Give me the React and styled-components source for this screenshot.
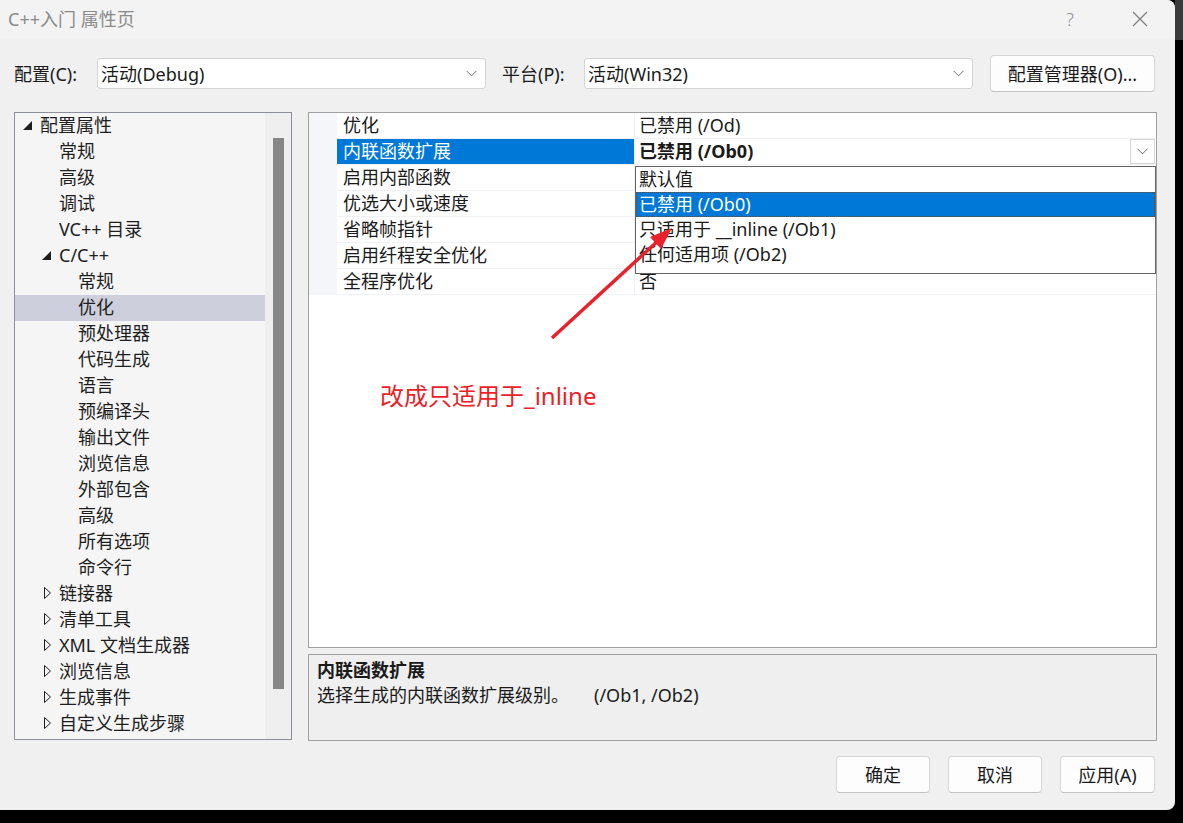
import styled, { createGlobalStyle } from "styled-components";

const GlobalStyle = createGlobalStyle`
  html, body {
    margin: 0;
    padding: 0;
    background: #000;
  }
  body {
    font-family: "Noto Sans", "Noto Sans CJK SC", sans-serif;
    color: #1a1a1a;
  }
`;

const Screen = styled.div`
  width: 1183px;
  height: 823px;
  display: flex;
  background: #000;
  overflow: hidden;
`;

const Dialog = styled.div`
  position: relative;
  width: 1175px;
  height: 810px;
  flex: none;
  background: #f0f0f0;
  border-radius: 0 8px 8px 0;
  display: flex;
  flex-direction: column;
  overflow: hidden;
`;

const Backdrop = styled.div`
  flex: 1;
  display: flex;
  flex-direction: column;
`;

const BackdropTop = styled.div`
  height: 40px;
  background: #3a3a3a;
`;

const TitleBar = styled.div`
  height: 38px;
  flex: none;
  display: flex;
  align-items: center;
  background: #f3f3f3;
  padding-left: 8px;
`;

const TitleText = styled.div`
  font-size: 18px;
  line-height: 22px;
  color: #8a8a8a;
`;

const TitleControls = styled.div`
  margin-left: auto;
  display: flex;
  height: 100%;
`;

const TitleButton = styled.div`
  width: 70px;
  height: 100%;
  display: flex;
  align-items: center;
  justify-content: center;
  color: #8c8c8c;
  font-size: 18px;
  font-weight: 300;
`;

const Body = styled.div`
  flex: 1;
  display: flex;
  flex-direction: column;
  padding: 0 18px 0 14px;
`;

const ConfigRow = styled.div`
  margin-top: 17px;
  height: 37px;
  display: flex;
  align-items: center;
`;

const FieldLabel = styled.div`
  width: ${(p) => p.$width}px;
  margin-left: ${(p) => p.$offset || 0}px;
  font-size: 18px;
  line-height: 26px;
  white-space: nowrap;
`;

const Select = styled.div`
  width: 389px;
  height: 31px;
  box-sizing: border-box;
  background: #fff;
  border: 1px solid #d4d4d4;
  border-radius: 3px;
  display: flex;
  align-items: center;
  padding: 0 8px 0 3px;
  font-size: 18px;
  line-height: 26px;
`;

const SelectValue = styled.span`
  flex: 1;
`;

const Button = styled.div`
  width: ${(p) => p.$width}px;
  height: 37px;
  margin-left: ${(p) => p.$offset || 0}px;
  box-sizing: border-box;
  background: #fdfdfd;
  border: 1px solid #d6d6d6;
  border-bottom-color: #c4c4c4;
  border-radius: 4px;
  display: flex;
  align-items: center;
  justify-content: center;
  font-size: 18px;
  line-height: 26px;
  color: #1a1a1a;
`;

const Main = styled.div`
  margin-top: 20px;
  display: grid;
  grid-template-columns: 278px 849px;
  column-gap: 16px;
`;

const TreePanel = styled.div`
  height: 628px;
  box-sizing: border-box;
  border: 1px solid #8a8f98;
  background: #f5f5f5;
  display: grid;
  grid-template-columns: 1fr 26px;
  overflow: hidden;
`;

const TreeList = styled.div`
  display: flex;
  flex-direction: column;
`;

const TreeRow = styled.div`
  height: 26px;
  box-sizing: border-box;
  padding-bottom: 2px;
  flex: none;
  display: flex;
  align-items: center;
  padding-left: ${(p) => 8 + p.$level * 19}px;
  background: ${(p) => (p.$selected ? "#cdd0dc" : "transparent")};
  font-size: 18px;
  line-height: 24px;
  color: #1e1e1e;
  white-space: nowrap;
`;

const Toggle = styled.span`
  width: 17px;
  flex: none;
  display: flex;
  align-items: center;
`;

const ScrollTrack = styled.div`
  background: #efefef;
  padding: 25px 6px 0 8px;
`;

const ScrollThumb = styled.div`
  height: 551px;
  width: 11px;
  background: #868686;
`;

const RightColumn = styled.div`
  display: flex;
  flex-direction: column;
  gap: 6px;
`;

const PropGrid = styled.div`
  position: relative;
  height: 536px;
  box-sizing: border-box;
  border: 1px solid #a0a0a0;
  background: #fff;
`;

const PropRow = styled.div`
  height: 26px;
  display: grid;
  grid-template-columns: 28px 298px 1fr;
  font-size: 18px;
  line-height: 25px;
`;

const Gutter = styled.div`
  background: #f4f6fa;
`;

const NameCell = styled.div`
  padding-left: 6px;
  border-bottom: 1px solid #eff1f5;
  border-right: 1px solid #eff1f5;
  background: ${(p) => (p.$selected ? "#0078d7" : "#fff")};
  color: ${(p) => (p.$selected ? "#fff" : "#1a1a1a")};
  white-space: nowrap;
`;

const ValueCell = styled.div`
  display: flex;
  align-items: flex-start;
  padding-left: 4px;
  border-bottom: 1px solid #eff1f5;
  font-weight: ${(p) => (p.$bold ? 700 : 400)};
  color: #1a1a1a;
  white-space: nowrap;
`;

const ValueText = styled.span`
  flex: 1;
`;

const DropButton = styled.div`
  width: 25px;
  height: 25px;
  margin-right: 1px;
  box-sizing: border-box;
  border: 1px solid #d6d6d6;
  background: #fff;
  display: flex;
  align-items: center;
  justify-content: center;
`;

const DropList = styled.div`
  position: absolute;
  left: 326px;
  top: 53px;
  width: 521px;
  height: 108px;
  box-sizing: border-box;
  border: 1px solid #646464;
  background: #fff;
  display: flex;
  flex-direction: column;
`;

const DropItem = styled.div`
  height: 25px;
  flex: none;
  padding-left: 3px;
  font-size: 18px;
  line-height: 25px;
  background: ${(p) => (p.$selected ? "#0078d7" : "transparent")};
  color: ${(p) => (p.$selected ? "#fff" : "#1a1a1a")};
  outline: ${(p) => (p.$selected ? "1px dotted #7a4a1a" : "none")};
  outline-offset: -1px;
  white-space: nowrap;
`;

const Description = styled.div`
  height: 87px;
  box-sizing: border-box;
  border: 1px solid #a0a0a0;
  background: #efefef;
  padding: 3px 8px 0 8px;
  font-size: 18px;
  line-height: 25px;
`;

const DescTitle = styled.div`
  font-weight: 700;
`;

const DescFlag = styled.span`
  margin-left: 25px;
`;

const Footer = styled.div`
  margin-top: 15px;
  padding-right: 2px;
  display: flex;
  justify-content: flex-end;
  gap: 18px;
`;

const Annotation = styled.div`
  position: absolute;
  left: 380px;
  top: 381px;
  font-size: 24px;
  line-height: 30px;
  color: #ea2228;
  white-space: nowrap;
`;

const ArrowLayer = styled.svg`
  position: absolute;
  left: 0;
  top: 0;
  pointer-events: none;
`;

const Chevron = () => (
  <svg width="11" height="7" viewBox="0 0 11 7">
    <path d="M0.5 0.8 L5.5 5.8 L10.5 0.8" fill="none" stroke="#6d6d6d" strokeWidth="1" />
  </svg>
);

const OpenArrow = () => (
  <svg width="9" height="9" viewBox="0 0 9 9">
    <polygon points="9,0 9,9 0,9" fill="#1e1e1e" />
  </svg>
);

const ClosedArrow = () => (
  <svg width="9" height="12" viewBox="0 0 9 12" style={{ marginLeft: 2 }}>
    <polygon points="0.5,0.5 6.5,6 0.5,11.5" fill="none" stroke="#1e1e1e" strokeWidth="1" />
  </svg>
);

const treeItems = [
  { label: "配置属性", level: 0, toggle: "open" },
  { label: "常规", level: 1 },
  { label: "高级", level: 1 },
  { label: "调试", level: 1 },
  { label: "VC++ 目录", level: 1 },
  { label: "C/C++", level: 1, toggle: "open" },
  { label: "常规", level: 2 },
  { label: "优化", level: 2, selected: true },
  { label: "预处理器", level: 2 },
  { label: "代码生成", level: 2 },
  { label: "语言", level: 2 },
  { label: "预编译头", level: 2 },
  { label: "输出文件", level: 2 },
  { label: "浏览信息", level: 2 },
  { label: "外部包含", level: 2 },
  { label: "高级", level: 2 },
  { label: "所有选项", level: 2 },
  { label: "命令行", level: 2 },
  { label: "链接器", level: 1, toggle: "closed" },
  { label: "清单工具", level: 1, toggle: "closed" },
  { label: "XML 文档生成器", level: 1, toggle: "closed" },
  { label: "浏览信息", level: 1, toggle: "closed" },
  { label: "生成事件", level: 1, toggle: "closed" },
  { label: "自定义生成步骤", level: 1, toggle: "closed" },
];

const properties = [
  { name: "优化", value: "已禁用 (/Od)" },
  { name: "内联函数扩展", value: "已禁用 (/Ob0)", selected: true },
  { name: "启用内部函数", value: "" },
  { name: "优选大小或速度", value: "" },
  { name: "省略帧指针", value: "" },
  { name: "启用纤程安全优化", value: "" },
  { name: "全程序优化", value: "否" },
];

const options = [
  { label: "默认值" },
  { label: "已禁用 (/Ob0)", selected: true },
  { label: "只适用于 __inline (/Ob1)" },
  { label: "任何适用项 (/Ob2)" },
];

function App() {
  return (
    <Screen>
      <GlobalStyle />
      <Dialog>
        <TitleBar>
          <TitleText>C++入门 属性页</TitleText>
          <TitleControls>
            <TitleButton>?</TitleButton>
            <TitleButton>
              <svg width="16" height="16" viewBox="0 0 16 16">
                <path d="M1 1 L15 15 M15 1 L1 15" stroke="#7d7d7d" strokeWidth="1.2" />
              </svg>
            </TitleButton>
          </TitleControls>
        </TitleBar>

        <Body>
          <ConfigRow>
            <FieldLabel $width={83}>配置(C):</FieldLabel>
            <Select>
              <SelectValue>活动(Debug)</SelectValue>
              <Chevron />
            </Select>
            <FieldLabel $width={82} $offset={16}>平台(P):</FieldLabel>
            <Select>
              <SelectValue>活动(Win32)</SelectValue>
              <Chevron />
            </Select>
            <Button $width={165} $offset={17}>配置管理器(O)...</Button>
          </ConfigRow>

          <Main>
            <TreePanel>
              <TreeList>
                {treeItems.map((item, i) => (
                  <TreeRow key={i} $level={item.level} $selected={item.selected}>
                    <Toggle>
                      {item.toggle === "open" && <OpenArrow />}
                      {item.toggle === "closed" && <ClosedArrow />}
                    </Toggle>
                    {item.label}
                  </TreeRow>
                ))}
              </TreeList>
              <ScrollTrack>
                <ScrollThumb />
              </ScrollTrack>
            </TreePanel>

            <RightColumn>
              <PropGrid>
                {properties.map((p, i) => (
                  <PropRow key={i}>
                    <Gutter />
                    <NameCell $selected={p.selected}>{p.name}</NameCell>
                    <ValueCell $bold={p.selected}>
                      <ValueText>{p.value}</ValueText>
                      {p.selected && (
                        <DropButton>
                          <Chevron />
                        </DropButton>
                      )}
                    </ValueCell>
                  </PropRow>
                ))}
                <DropList>
                  {options.map((o, i) => (
                    <DropItem key={i} $selected={o.selected}>
                      {o.label}
                    </DropItem>
                  ))}
                </DropList>
              </PropGrid>

              <Description>
                <DescTitle>内联函数扩展</DescTitle>
                <div>
                  选择生成的内联函数扩展级别。
                  <DescFlag>(/Ob1, /Ob2)</DescFlag>
                </div>
              </Description>
            </RightColumn>
          </Main>

          <Footer>
            <Button $width={94}>确定</Button>
            <Button $width={94}>取消</Button>
            <Button $width={95}>应用(A)</Button>
          </Footer>
        </Body>

        <ArrowLayer width="1175" height="810" viewBox="0 0 1175 810">
          <line x1="552" y1="338" x2="660" y2="239" stroke="#e8212a" strokeWidth="3.5" />
          <polygon points="672,228 661,249 650,237" fill="#e8212a" />
        </ArrowLayer>
        <Annotation>改成只适用于_inline</Annotation>
      </Dialog>
      <Backdrop>
        <BackdropTop />
      </Backdrop>
    </Screen>
  );
}

export default App;
